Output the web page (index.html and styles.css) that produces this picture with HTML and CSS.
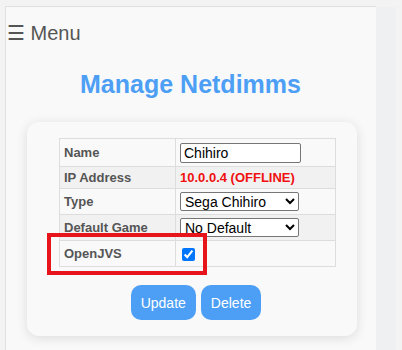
FILE: index.html
```html
<!DOCTYPE html>
<html lang="en">
<head>
    <meta charset="UTF-8">
    <meta name="viewport" content="width=device-width, initial-scale=1.0">
    <title>Manage Netdimms</title>
    <link rel="stylesheet" href="styles.css">
</head>
<body>
    <div id="pagina">
        <div id="conteudo">
            <div id="menu">&#9776; Menu</div>
            <h1>Manage Netdimms</h1>
            <div id="caixa">
                <table>
                    <tr class="alta">
                        <td class="rotulo">Name</td>
                        <td><input type="text" value="Chihiro"></td>
                    </tr>
                    <tr class="baixa">
                        <td class="rotulo">IP Address</td>
                        <td class="offline">10.0.0.4 (OFFLINE)</td>
                    </tr>
                    <tr>
                        <td class="rotulo">Type</td>
                        <td>
                            <select>
                                <option>Sega Chihiro</option>
                            </select>
                        </td>
                    </tr>
                    <tr>
                        <td class="rotulo">Default Game</td>
                        <td>
                            <select>
                                <option>No Default</option>
                            </select>
                        </td>
                    </tr>
                    <tr>
                        <td class="rotulo">OpenJVS</td>
                        <td><input type="checkbox" checked></td>
                    </tr>
                </table>
                <div id="botoes">
                    <button>Update</button>
                    <button>Delete</button>
                </div>
                <div id="destaque"></div>
            </div>
        </div>
        <div id="lateral"></div>
    </div>
</body>
</html>
```

FILE: styles.css
```css
* {
    margin: 0;
    padding: 0;
    box-sizing: border-box;
}

body {
    font-family: Arial, "Liberation Sans", sans-serif;
    background-color: #f3f3f3;
    color: #555;
    height: 350px;
    overflow: hidden;
}

#pagina {
    display: flex;
    padding: 6px 0 0 5px;
    height: 100%;
}

#conteudo {
    width: 371px;
    background-color: #f9f9f9;
    border-top: 1px solid #e0e0e0;
    border-left: 1px solid #e0e0e0;
    padding: 15px 0 0 1px;
}

#lateral {
    width: 20px;
    background-color: #eff0f2;
    margin-top: 1px;
}

#menu {
    font-size: 20px;
    color: #555;
    line-height: 22px;
}

h1 {
    font-size: 25px;
    color: #4d9ff5;
    text-align: center;
    margin-top: 26px;
    line-height: 28px;
    margin-right: 2px;
}

#caixa {
    position: relative;
    margin: 24px 19px 0 20px;
    background-color: #f9f9f9;
    border-radius: 12px;
    box-shadow: 0 2px 12px rgba(0, 0, 0, 0.12);
    padding: 16px 20px 16px 32px;
}

table {
    border-collapse: collapse;
    width: 277px;
    font-size: 13px;
}

td {
    border: 1px solid #ddd;
    height: 26px;
    padding: 0 4px;
}

tr.alta td {
    height: 28px;
}

tr.baixa td {
    height: 22px;
}

td.rotulo {
    font-weight: bold;
    width: 116px;
}

tr:nth-child(even) td {
    background-color: #f1f1f1;
}

.offline {
    color: #f01010;
    font-weight: bold;
}

input[type="text"] {
    font-family: Arial, "Liberation Sans", sans-serif;
    font-size: 14px;
    width: 121px;
    height: 20px;
    padding: 0 3px;
    border: 1px solid #767676;
    border-radius: 2px;
    color: #000;
    background-color: #fff;
}

select {
    font-family: Arial, "Liberation Sans", sans-serif;
    font-size: 14px;
    width: 119px;
    height: 19px;
    border: 1px solid #767676;
    border-radius: 2px;
    color: #000;
    background-color: #fff;
}

input[type="checkbox"] {
    width: 13px;
    height: 13px;
    margin-left: 2px;
    accent-color: #0075ff;
    vertical-align: middle;
}

#botoes {
    display: flex;
    justify-content: center;
    gap: 5px;
    margin-top: 18px;
    margin-right: 4px;
}

button {
    background-color: #4d9ff5;
    color: #fff;
    border: none;
    border-radius: 10px;
    font-family: Arial, "Liberation Sans", sans-serif;
    font-size: 14px;
    padding: 0 10px;
    height: 35px;
}

#destaque {
    position: absolute;
    left: 20px;
    top: 111px;
    width: 160px;
    height: 42px;
    border: 4px solid #e8141c;
}
```
